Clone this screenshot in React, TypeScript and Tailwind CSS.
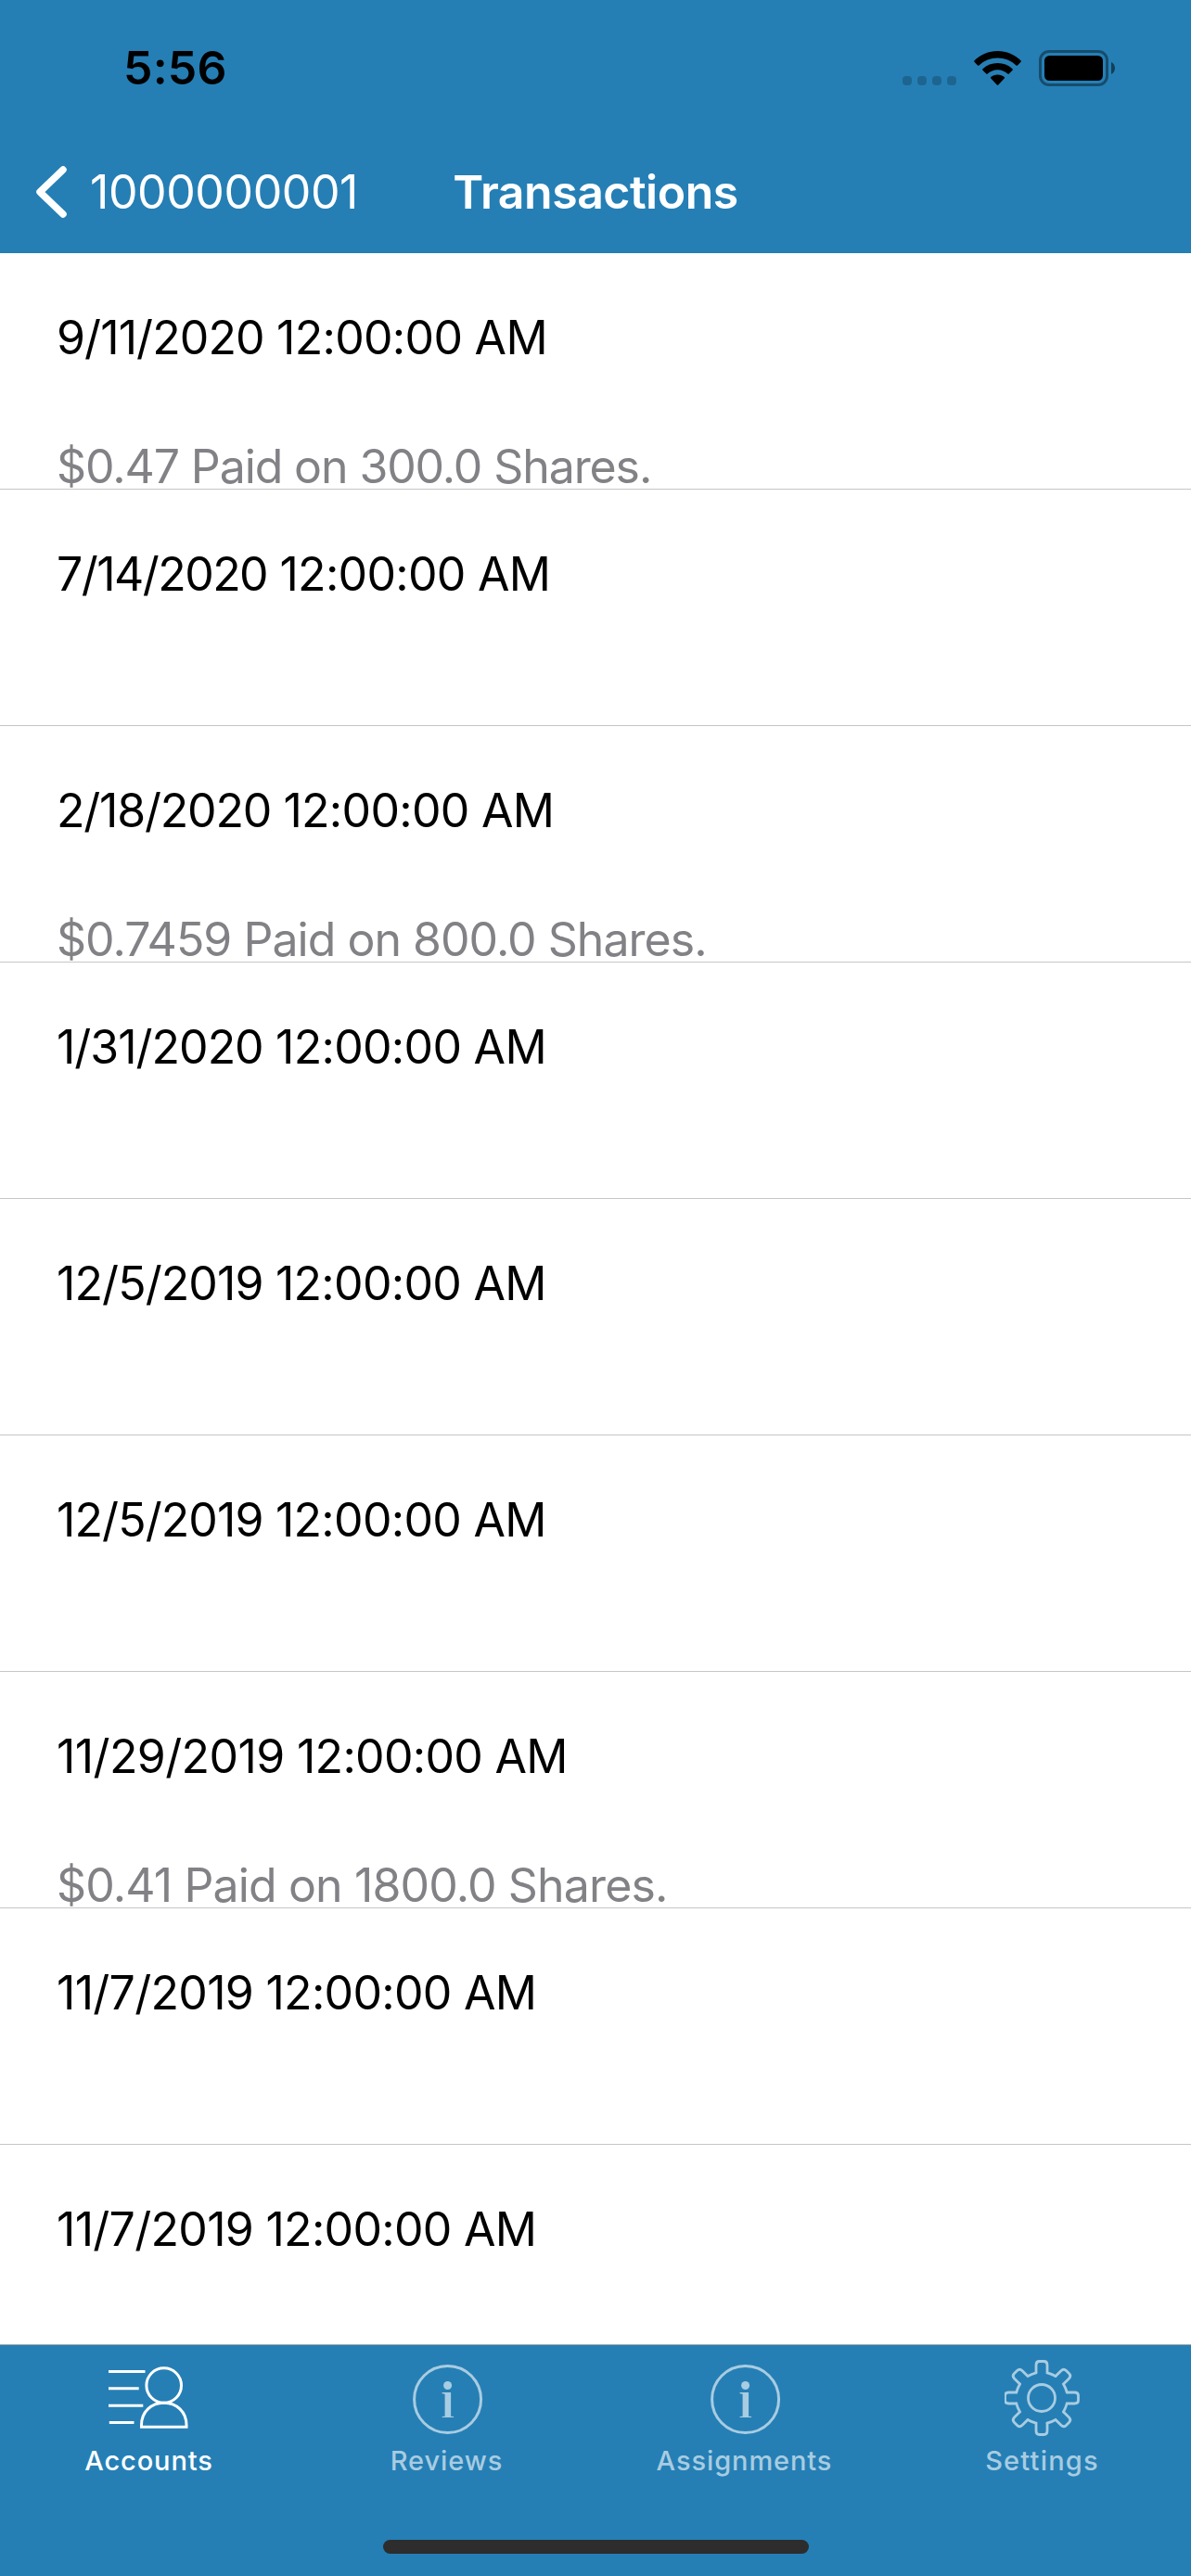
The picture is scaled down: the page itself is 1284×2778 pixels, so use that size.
import React from "react";

type Transaction = {
  date: string;
  dateTracking: string;
  note?: string;
  noteTracking?: string;
};

const transactions: Transaction[] = [
  { date: "9/11/2020", dateTracking: "tracking-[-0.9px]", note: "$0.47 Paid on 300.0 Shares.", noteTracking: "tracking-[-1.1px]" },
  { date: "7/14/2020", dateTracking: "tracking-[-1.55px]" },
  { date: "2/18/2020", dateTracking: "tracking-[-1.2px]", note: "$0.7459 Paid on 800.0 Shares.", noteTracking: "tracking-[-0.97px]" },
  { date: "1/31/2020", dateTracking: "tracking-[-1px]" },
  { date: "12/5/2019", dateTracking: "tracking-[-0.9px]" },
  { date: "12/5/2019", dateTracking: "tracking-[-0.9px]" },
  { date: "11/29/2019", dateTracking: "tracking-[-0.6px]", note: "$0.41 Paid on 1800.0 Shares.", noteTracking: "tracking-[-0.85px]" },
  { date: "11/7/2019", dateTracking: "tracking-[-0.7px]" },
  { date: "11/7/2019", dateTracking: "tracking-[-0.7px]" },
];

function WifiIcon() {
  return (
    <svg className="ml-[19px] h-[37px] w-[51px]" viewBox="0 0 51 37" fill="currentColor">
      <path d="M25.500 0C35 0 44 3.800 50.500 10.200c.5.500.5 1 .1 1.500l-3.600 3.700c-.5.500-1 .5-1.500 0C40.200 10.200 33 7.400 25.500 7.400S10.800 10.200 5.500 15.400c-.5.500-1 .5-1.500 0L.4 11.700c-.4-.5-.4-1 .1-1.500C7 3.800 16 0 25.500 0z" />
      <path d="M25.500 13c6 0 11.700 2.200 16 6.200.5.500.5 1 .1 1.500l-3.800 3.900c-.5.500-1 .5-1.500 0-3-2.700-6.800-4.300-10.800-4.300s-7.800 1.600-10.800 4.300c-.5.500-1 .5-1.500 0l-3.800-3.900c-.4-.5-.4-1 .1-1.500 4.300-4 10-6.200 16-6.200z" />
      <path d="M25.500 25.400c2.700 0 5.300.9 7.300 2.500.5.500.5 1 0 1.500L26.300 36.400c-.5.500-1.100.5-1.600 0L18.200 29.400c-.5-.5-.5-1 0-1.500C20.200 26.300 22.800 25.400 25.500 25.400z" />
    </svg>
  );
}

function BatteryIcon() {
  return (
    <svg className="ml-[19px] h-[39px] w-[82px]" viewBox="0 0 82 39">
      <rect x="1.500" y="1.500" width="72" height="36" rx="9.500" fill="none" stroke="#000" strokeOpacity="0.4" strokeWidth="3" />
      <rect x="6" y="6" width="63" height="27" rx="5.500" />
      <path d="M78 13c2.500 1 4 3.600 4 6.500S80.500 25 78 26z" fillOpacity="0.5" />
    </svg>
  );
}

function AccountsIcon() {
  return (
    <svg className="h-[82px] w-[89px]" viewBox="0.500 0 89 82" fill="none" stroke="currentColor" strokeWidth="3">
      <path d="M1.500 12.500H41M1.500 30.700H34.200M1.500 49.200H38.800M2.300 67.500H29" />
      <circle cx="61.200" cy="27.500" r="18.800" />
      <path d="M37 72.300v-2C37 56 47.500 46.300 61.200 46.300S85.500 56 85.500 70.300v2z" />
    </svg>
  );
}

function InfoIcon() {
  return (
    <svg className="ml-[2px] h-[82px] w-[81px]" viewBox="0.400 0 81 82">
      <circle cx="41" cy="42.500" r="36" fill="none" stroke="currentColor" strokeWidth="3" />
      <g fill="currentColor">
        <circle cx="41" cy="27.500" r="4.500" />
        <path d="M35 35h9.500v25.700l3 .4V62H35v-.9l3-.4V36.800l-3-.5z" />
      </g>
    </svg>
  );
}

function SettingsIcon() {
  return (
    <svg className="h-[82px] w-[81px]" viewBox="-40 -41 81 82" fill="none" stroke="currentColor" strokeWidth="2.800">
      <circle r="14.500" />
      {[0, 45, 90, 135, 180, 225, 270, 315].map((angle) => (
        <path
          key={angle}
          transform={`rotate(${angle})`}
          d="M-6-27.200V-35.500Q-6-39.500-2.500-39.500H2.500Q6-39.500 6-35.500V-27.200Q10.600-26 15-23.500"
          strokeLinecap="round"
        />
      ))}
    </svg>
  );
}

const tabs = [
  { label: "Accounts", Icon: AccountsIcon, tone: "text-white", tracking: "tracking-[0.9px]" },
  { label: "Reviews", Icon: InfoIcon, tone: "text-[#a8cce1]", tracking: "tracking-[0.9px]" },
  { label: "Assignments", Icon: InfoIcon, tone: "text-[#a8cce1]", tracking: "tracking-[0.9px]" },
  { label: "Settings", Icon: SettingsIcon, tone: "text-[#a8cce1]", tracking: "tracking-[1.2px]" },
];

export default function App() {
  return (
    <div className="flex h-[2778px] w-[1284px] flex-col overflow-hidden bg-white font-['Inter',sans-serif] text-black">
      <header className="h-[273px] shrink-0 bg-[#257fb5]">
        <div className="flex h-[146px] items-center justify-between pr-[82px] pl-[133px]">
          <span className="text-[50px] leading-[60px] font-semibold tracking-[0.2px]">5:56</span>
          <div className="flex items-center">
            <div className="mt-[27px] flex gap-[6px]">
              {[0, 1, 2, 3].map((dot) => (
                <span key={dot} className="size-[10px] rounded-[4px] bg-black/20" />
              ))}
            </div>
            <WifiIcon />
            <BatteryIcon />
          </div>
        </div>
        <div className="grid h-[122px] grid-cols-[1fr_auto_1fr] items-center text-[50px] leading-[60px] text-white">
          <div className="flex items-center pl-[38px]">
            <svg className="h-[58px] w-[35px]" viewBox="0 0 35 58" fill="none" stroke="currentColor" strokeWidth="7.500" strokeLinecap="round" strokeLinejoin="round">
              <path d="M30 5 5 29l25 24" />
            </svg>
            <span className="ml-[24px] tracking-[-0.4px]">1000000001</span>
          </div>
          <h1 className="font-semibold tracking-[-0.5px]">Transactions</h1>
        </div>
      </header>

      <main className="min-h-0 flex-1 overflow-hidden">
        {transactions.map((item, index) => (
          <div key={index} className="h-[255px] border-b border-[#c6c6c8] pt-[61px] pl-[61px] text-[50px] leading-[60px] whitespace-nowrap">
            <p className="tracking-[-0.7px]">
              <span className={item.dateTracking}>{item.date}</span>
              <span> 12:00:00 AM</span>
            </p>
            {item.note && <p className={`mt-[79px] h-[54px] text-[#828286] ${item.noteTracking}`}>{item.note}</p>}
          </div>
        ))}
      </main>

      <footer className="flex h-[250px] shrink-0 flex-col items-center border-t border-[#a9a9ab] bg-[#257fb5]">
        <nav className="grid w-full grid-cols-4 pt-[16px]">
          {tabs.map(({ label, Icon, tone, tracking }) => (
            <div key={label} className={`flex flex-col items-center ${tone}`}>
              <Icon />
              <span className={`mt-[9px] text-[29px] leading-[36px] font-medium ${tracking}`}>{label}</span>
            </div>
          ))}
        </nav>
        <div className="mt-[67px] h-[15px] w-[459px] rounded-full bg-[#2d2d2d]" />
      </footer>
    </div>
  );
}
